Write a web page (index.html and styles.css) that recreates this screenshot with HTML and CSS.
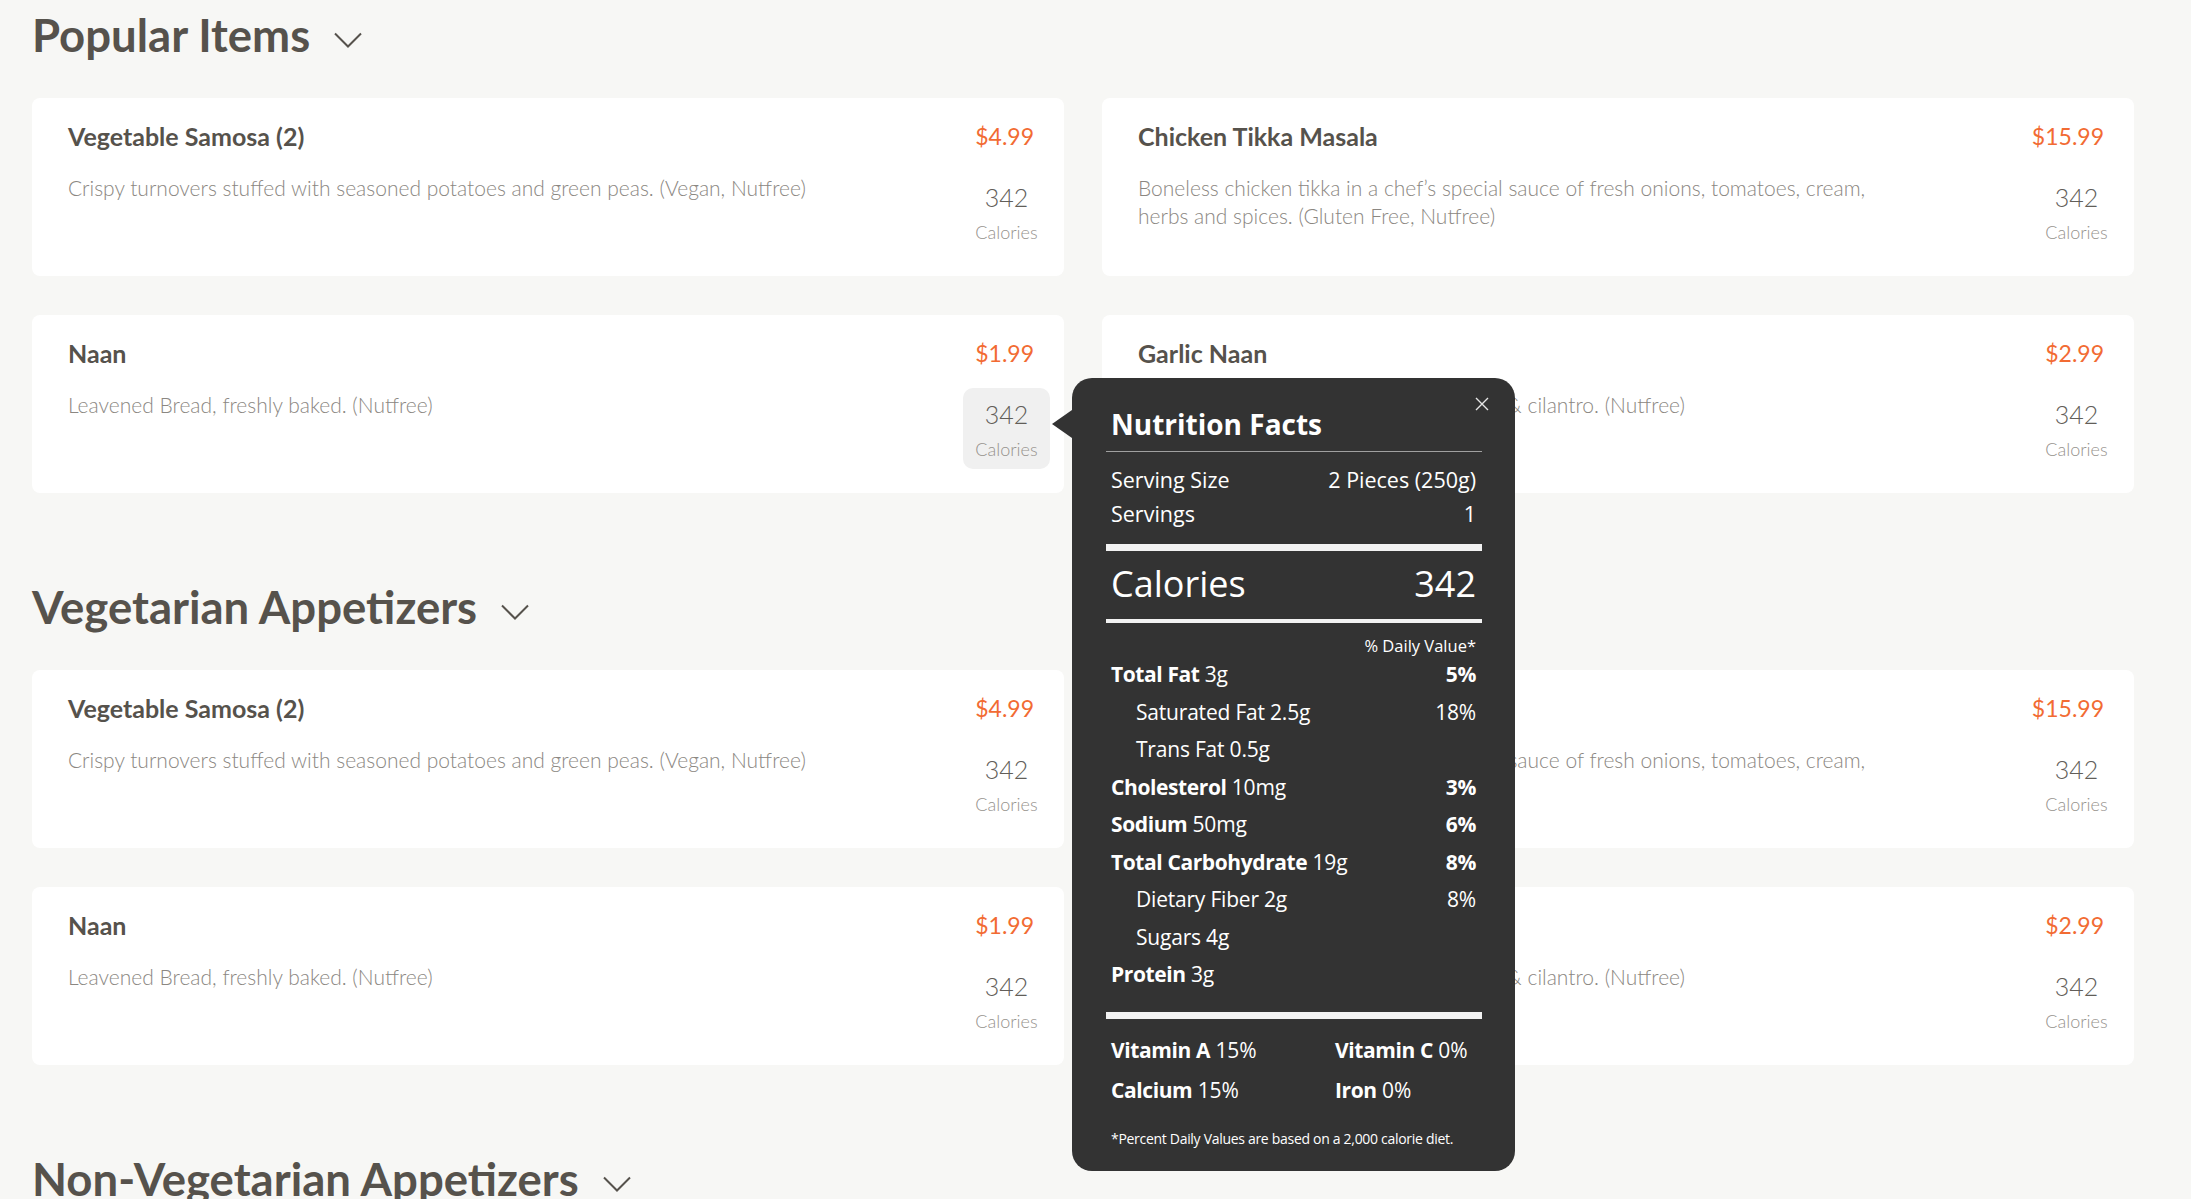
FILE: index.html
```html
<!DOCTYPE html>
<html lang="en">
<head>
<meta charset="utf-8">
<title>Menu</title>
<link rel="stylesheet" href="styles.css">
</head>
<body>
<main class="menu">

  <section class="category">
    <h2 class="category-title">Popular Items <svg class="chev" viewBox="0 0 28 16" width="28" height="16"><polyline points="1,1.5 14,14.5 27,1.5"/></svg></h2>
    <div class="items">
      <article class="item">
        <h3 class="item-name">Vegetable Samosa (2)</h3>
        <div class="item-price">$4.99</div>
        <p class="item-desc">Crispy turnovers stuffed with seasoned potatoes and green peas. (Vegan, Nutfree)</p>
        <div class="cal"><span class="cal-num">342</span><span class="cal-label">Calories</span></div>
      </article>
      <article class="item">
        <h3 class="item-name">Chicken Tikka Masala</h3>
        <div class="item-price">$15.99</div>
        <p class="item-desc">Boneless chicken tikka in a chef’s special sauce of fresh onions, tomatoes, cream, herbs and spices. (Gluten Free, Nutfree)</p>
        <div class="cal"><span class="cal-num">342</span><span class="cal-label">Calories</span></div>
      </article>
      <article class="item">
        <h3 class="item-name">Naan</h3>
        <div class="item-price">$1.99</div>
        <p class="item-desc">Leavened Bread, freshly baked. (Nutfree)</p>
        <div class="cal cal-active"><span class="cal-num">342</span><span class="cal-label">Calories</span>
          <div class="nf">
            <svg class="nf-close" viewBox="0 0 14 14" width="14" height="14"><path d="M1 1 L13 13 M13 1 L1 13"/></svg>
            <h4 class="nf-title">Nutrition Facts</h4>
            <div class="nf-rule"></div>
            <div class="nf-serving">
              <div class="nf-row"><span>Serving Size</span><span>2 Pieces (250g)</span></div>
              <div class="nf-row"><span>Servings</span><span>1</span></div>
            </div>
            <div class="nf-bar"></div>
            <div class="nf-row nf-cal"><span>Calories</span><span>342</span></div>
            <div class="nf-bar-mid"></div>
            <div class="nf-dv">% Daily Value*</div>
            <div class="nf-list">
              <div class="nf-row"><span><b>Total Fat</b> 3g</span><b>5%</b></div>
              <div class="nf-row nf-sub"><span>Saturated Fat 2.5g</span><span>18%</span></div>
              <div class="nf-row nf-sub"><span>Trans Fat 0.5g</span><span></span></div>
              <div class="nf-row"><span><b>Cholesterol</b> 10mg</span><b>3%</b></div>
              <div class="nf-row"><span><b>Sodium</b> 50mg</span><b>6%</b></div>
              <div class="nf-row"><span><b>Total Carbohydrate</b> 19g</span><b>8%</b></div>
              <div class="nf-row nf-sub"><span>Dietary Fiber 2g</span><span>8%</span></div>
              <div class="nf-row nf-sub"><span>Sugars 4g</span><span></span></div>
              <div class="nf-row"><span><b>Protein</b> 3g</span><span></span></div>
            </div>
            <div class="nf-bar nf-bar-2"></div>
            <div class="nf-vits">
              <span><b>Vitamin A</b> 15%</span><span><b>Vitamin C</b> 0%</span>
              <span><b>Calcium</b> 15%</span><span><b>Iron</b> 0%</span>
            </div>
            <p class="nf-foot">*Percent Daily Values are based on a 2,000 calorie diet.</p>
          </div>
        </div>
      </article>
      <article class="item">
        <h3 class="item-name">Garlic Naan</h3>
        <div class="item-price">$2.99</div>
        <p class="item-desc">Leavened Bread topped with fresh garlic &amp; cilantro. (Nutfree)</p>
        <div class="cal"><span class="cal-num">342</span><span class="cal-label">Calories</span></div>
      </article>
    </div>
  </section>

  <section class="category">
    <h2 class="category-title">Vegetarian Appetizers <svg class="chev" viewBox="0 0 28 16" width="28" height="16"><polyline points="1,1.5 14,14.5 27,1.5"/></svg></h2>
    <div class="items">
      <article class="item">
        <h3 class="item-name">Vegetable Samosa (2)</h3>
        <div class="item-price">$4.99</div>
        <p class="item-desc">Crispy turnovers stuffed with seasoned potatoes and green peas. (Vegan, Nutfree)</p>
        <div class="cal"><span class="cal-num">342</span><span class="cal-label">Calories</span></div>
      </article>
      <article class="item">
        <h3 class="item-name">Chicken Tikka Masala</h3>
        <div class="item-price">$15.99</div>
        <p class="item-desc">Boneless chicken tikka in a chef’s special sauce of fresh onions, tomatoes, cream, herbs and spices. (Gluten Free, Nutfree)</p>
        <div class="cal"><span class="cal-num">342</span><span class="cal-label">Calories</span></div>
      </article>
      <article class="item">
        <h3 class="item-name">Naan</h3>
        <div class="item-price">$1.99</div>
        <p class="item-desc">Leavened Bread, freshly baked. (Nutfree)</p>
        <div class="cal"><span class="cal-num">342</span><span class="cal-label">Calories</span></div>
      </article>
      <article class="item">
        <h3 class="item-name">Garlic Naan</h3>
        <div class="item-price">$2.99</div>
        <p class="item-desc">Leavened Bread topped with fresh garlic &amp; cilantro. (Nutfree)</p>
        <div class="cal"><span class="cal-num">342</span><span class="cal-label">Calories</span></div>
      </article>
    </div>
  </section>

  <section class="category">
    <h2 class="category-title">Non-Vegetarian Appetizers <svg class="chev" viewBox="0 0 28 16" width="28" height="16"><polyline points="1,1.5 14,14.5 27,1.5"/></svg></h2>
  </section>

</main>
</body>
</html>
```

FILE: styles.css
```css
html {
  overflow: hidden;
}

body {
  margin: 0;
  background: #f7f7f5;
  font-family: Lato, "Liberation Sans", sans-serif;
  color: #56524c;
}

.menu {
  padding: 5px 57px 0 32px;
}

.category + .category {
  margin-top: 84px;
}

.category-title {
  margin: 0 0 33px;
  display: flex;
  align-items: center;
  gap: 24px;
  font-size: 45.5px;
  line-height: 60px;
  font-weight: 700;
  color: #56524c;
}

.chev {
  margin-top: 10px;
  fill: none;
  stroke: #56524c;
  stroke-width: 2;
}

.items {
  display: grid;
  grid-template-columns: 1fr 1fr;
  gap: 39px 38px;
}

.item {
  box-sizing: border-box;
  height: 178px;
  padding: 20px 14px 24px 36px;
  background: #fff;
  border-radius: 8px;
  display: grid;
  grid-template-columns: 1fr 87px;
  grid-template-rows: 36px auto;
  row-gap: 17px;
}

.item-name {
  margin: 0;
  font-size: 25px;
  line-height: 36px;
  font-weight: 700;
  color: #56524c;
}

.item-price {
  justify-self: end;
  margin-right: 16px;
  white-space: nowrap;
  font-size: 23px;
  line-height: 36px;
  color: #f26b33;
}

.item-desc {
  margin: 3px 0 0;
  max-width: 760px;
  font-size: 21px;
  line-height: 28px;
  font-weight: 300;
  color: #8b8782;
}

.cal {
  position: relative;
  box-sizing: border-box;
  width: 87px;
  height: 81px;
  padding-top: 10px;
  border-radius: 10px;
  display: flex;
  flex-direction: column;
  align-items: center;
}

.cal-active {
  background: #f0f0f0;
}

.cal-num {
  font-size: 25px;
  line-height: 32px;
  font-weight: 300;
  color: #625e59;
}

.cal-label {
  margin-top: 7px;
  font-size: 18px;
  line-height: 24px;
  font-weight: 300;
  color: #96928d;
}

/* Nutrition facts popover */
.nf {
  position: absolute;
  left: calc(100% + 22px);
  top: -10px;
  z-index: 10;
  box-sizing: border-box;
  width: 443px;
  padding: 28px 33px 22px 34px;
  background: #333333;
  border-radius: 20px;
  color: #ffffff;
  font-family: "Open Sans", "Noto Sans", sans-serif;
  text-align: left;
}

.nf::before {
  content: "";
  position: absolute;
  left: -20px;
  top: 32px;
  border-right: 20px solid #333333;
  border-top: 14px solid transparent;
  border-bottom: 14px solid transparent;
}

.nf-close {
  position: absolute;
  top: 19px;
  right: 26px;
  fill: none;
  stroke: #e6e6e6;
  stroke-width: 1.4;
}

.nf-title {
  margin: 0 0 9px;
  padding-left: 5px;
  font-size: 28px;
  line-height: 36px;
  font-weight: 700;
}

.nf-rule {
  height: 1px;
  background: #a0a0a0;
}

.nf-row {
  display: flex;
  justify-content: space-between;
  padding: 0 6px 0 5px;
}

.nf-row b {
  font-weight: 700;
}

.nf-serving {
  margin-top: 11px;
  font-size: 21.5px;
  line-height: 34px;
}

.nf-bar {
  height: 7px;
  margin-top: 13px;
  background: #f2f2f2;
}

.nf-cal {
  margin-top: 11px;
  font-size: 36px;
  line-height: 44px;
}

.nf-bar-mid {
  height: 4px;
  margin-top: 13px;
  background: #f2f2f2;
}

.nf-dv {
  margin-top: 12px;
  padding-right: 6px;
  text-align: right;
  font-size: 16.5px;
  line-height: 22px;
}

.nf-list {
  margin-top: -1px;
  font-size: 21px;
  line-height: 37.5px;
  letter-spacing: -0.2px;
}

.nf-list b,
.nf-vits b {
  font-weight: 700;
  letter-spacing: -0.4px;
}

.nf-sub {
  padding-left: 30px;
}

.nf-bar-2 {
  margin-top: 18.5px;
}

.nf-vits {
  margin-top: 11px;
  padding: 0 6px 0 5px;
  display: grid;
  grid-template-columns: 224px 1fr;
  font-size: 21px;
  line-height: 40px;
  letter-spacing: -0.1px;
}

.nf-foot {
  margin: 19px 0 0;
  padding-left: 5px;
  font-size: 14px;
  line-height: 20px;
  letter-spacing: -0.3px;
}
```
